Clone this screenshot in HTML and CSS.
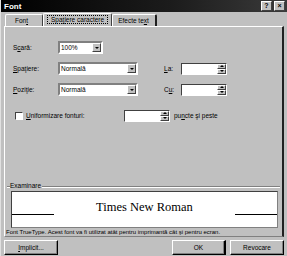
FILE: index.html
```html
<!DOCTYPE html>
<html lang="ro">
<head>
    <meta charset="UTF-8">
    <title>Font</title>
    <link rel="stylesheet" href="styles.css">
</head>
<body>
    <div class="window">
        <div class="titlebar">
            <span class="title">Font</span>
            <div class="title-buttons">
                <span class="tbtn">?</span>
                <span class="tbtn">&#215;</span>
            </div>
        </div>

        <div class="tabs">
            <div class="tab">Fon<u>t</u></div>
            <div class="tab active"><span class="focus">Spa<u>ţ</u>iere caractere</span></div>
            <div class="tab">Efecte te<u>x</u>t</div>
        </div>

        <div class="panel">
            <div class="row">
                <label class="lbl">S<u>c</u>ară:</label>
                <div class="select short"><span>100%</span><i class="drop"></i></div>
            </div>
            <div class="row">
                <label class="lbl"><u>S</u>paţiere:</label>
                <div class="select"><span>Normală</span><i class="drop"></i></div>
                <label class="lbl-small"><u>L</u>a:</label>
                <div class="spin"><span></span><i class="arrows"><b class="up"></b><b class="down"></b></i></div>
            </div>
            <div class="row">
                <label class="lbl"><u>P</u>oziţie:</label>
                <div class="select"><span>Normală</span><i class="drop"></i></div>
                <label class="lbl-small">C<u>u</u>:</label>
                <div class="spin"><span></span><i class="arrows"><b class="up"></b><b class="down"></b></i></div>
            </div>
            <div class="row kern">
                <span class="check"></span>
                <label class="lbl-kern"><u>U</u>niformizare fonturi:</label>
                <div class="spin"><span></span><i class="arrows"><b class="up"></b><b class="down"></b></i></div>
                <label class="after">pu<u>n</u>cte şi peste</label>
            </div>

            <div class="preview-group">
                <div class="group-title">Examinare</div>
                <div class="preview">
                    <span class="line"></span>
                    <span class="sample">Times New Roman</span>
                    <span class="line"></span>
                </div>
            </div>
            <p class="note">Font TrueType. Acest font va fi utilizat atât pentru imprimantă cât şi pentru ecran.</p>
        </div>

        <div class="buttons">
            <button class="btn"><u>I</u>mplicit...</button>
            <div class="right-buttons">
                <button class="btn default">OK</button>
                <button class="btn">Revocare</button>
            </div>
        </div>
    </div>
</body>
</html>
```

FILE: styles.css
```css
body {
    margin: 0;
    background: #c0c0c0;
    font-family: "Liberation Sans", Arial, sans-serif;
    font-size: 6.5px;
    color: #000;
}

.window {
    width: 287px;
    height: 256px;
    background: #c0c0c0;
    box-sizing: border-box;
    border-left: 1px solid #e0e0e0;
    overflow: hidden;
}

/* Bara de titlu */
.titlebar {
    height: 12px;
    display: flex;
    align-items: center;
    justify-content: space-between;
    padding: 0 2px 0 3px;
    background: linear-gradient(90deg, #000 0%, #1c1c1c 60%, #3a3a3a 100%);
}

.title {
    color: #fff;
    font-weight: bold;
    font-size: 8px;
}

.title-buttons {
    display: flex;
    gap: 2px;
}

.tbtn {
    width: 9px;
    height: 8px;
    background: #c0c0c0;
    border: 1px solid;
    border-color: #fff #404040 #404040 #fff;
    font-size: 7px;
    font-weight: bold;
    line-height: 8px;
    text-align: center;
}

/* Taburi */
.tabs {
    display: flex;
    align-items: flex-end;
    padding: 1px 0 0 4px;
    height: 13px;
}

.tab {
    height: 11px;
    line-height: 11px;
    padding: 0 8px;
    border: 1px solid;
    border-color: #fff #404040 transparent #fff;
    border-bottom: none;
    border-radius: 2px 2px 0 0;
}

.tab:first-child {
    width: 20px;
    padding: 0 7px 0 9px;
}

.tab.active {
    height: 12px;
    padding: 0 4px;
    line-height: 12px;
}

.focus {
    outline: 1px dotted #000;
    padding: 0 3px;
}

.tab:last-child {
    padding: 0 6px 0 5px;
    border-right: 2px solid #202020;
}

/* Panou */
.panel {
    margin: 0 3px 0 3px;
    height: 211px;
    box-sizing: border-box;
    border: 1px solid;
    border-color: #fff #202020 #808080 #fff;
    border-right-width: 2px;
    padding: 14px 6px 0 8px;
    display: flex;
    flex-direction: column;
}

.row {
    display: flex;
    align-items: center;
    height: 13px;
    margin-bottom: 8px;
}

.lbl {
    width: 45px;
}

.lbl-small {
    width: 17px;
    margin-left: 26px;
}

.select {
    width: 80px;
    height: 13px;
    box-sizing: border-box;
    background: #fff;
    border: 2px solid;
    border-color: #808080 #fff #fff #808080;
    display: flex;
    align-items: center;
    justify-content: space-between;
    padding-left: 1px;
}

.select.short {
    width: 45px;
}

.drop {
    width: 9px;
    height: 9px;
    box-sizing: border-box;
    background: #c0c0c0;
    border: 1px solid;
    border-color: #fff #404040 #404040 #fff;
    display: flex;
    align-items: center;
    justify-content: center;
}

.drop::after {
    content: "";
    border-left: 2px solid transparent;
    border-right: 2px solid transparent;
    border-top: 2px solid #000;
}

.spin {
    width: 46px;
    height: 12px;
    box-sizing: border-box;
    background: #fff;
    border: 1px solid;
    border-color: #404040 #fff #fff #404040;
    display: flex;
    justify-content: flex-end;
}

.arrows {
    width: 9px;
    display: flex;
    flex-direction: column;
}

.arrows b {
    flex: 1;
    background: #c0c0c0;
    border: 1px solid;
    border-color: #fff #404040 #404040 #fff;
    display: flex;
    align-items: center;
    justify-content: center;
}

.up::after {
    content: "";
    border-left: 2px solid transparent;
    border-right: 2px solid transparent;
    border-bottom: 2px solid #000;
}

.down::after {
    content: "";
    border-left: 2px solid transparent;
    border-right: 2px solid transparent;
    border-top: 2px solid #000;
}

.kern {
    margin-top: 5px;
}

.check {
    width: 6px;
    height: 6px;
    background: #fff;
    border: 1px solid;
    border-color: #404040 #fff #fff #404040;
    margin: 0 3px 0 2px;
}

.lbl-kern {
    width: 98px;
}

.after {
    margin-left: 4px;
}

/* Examinare */
.preview-group {
    margin-top: 56px;
    margin-left: -6px;
    margin-right: -4px;
    border-top: 1px solid #808080;
    box-shadow: 0 1px 0 #fff inset;
    position: relative;
}

.group-title {
    position: absolute;
    top: -5px;
    left: 3px;
    background: #c0c0c0;
    padding-right: 1px;
}

.preview {
    margin: 4px 2px 0 4px;
    height: 37px;
    background: #fff;
    border: 1px solid;
    border-color: #404040 #808080 #808080 #404040;
    display: flex;
    align-items: center;
    justify-content: space-between;
    padding-top: 2px;
    box-sizing: border-box;
}

.line {
    width: 42px;
    border-top: 1px solid #000;
    margin-top: 8px;
}

.sample {
    font-family: "Liberation Serif", "Times New Roman", serif;
    font-size: 12.5px;
    margin-bottom: 6px;
}

.note {
    margin: 1px 0 0 -7px;
    font-size: 6px;
    white-space: nowrap;
}

/* Butoane */
.buttons {
    display: flex;
    justify-content: space-between;
    padding: 3px 3px 0 3px;
}

.right-buttons {
    display: flex;
    gap: 4px;
}

.btn {
    width: 54px;
    height: 15px;
    font-family: inherit;
    font-size: 6.5px;
    color: #000;
    background: #c0c0c0;
    border: 1px solid;
    border-color: #fff #000 #000 #fff;
    box-shadow: inset -1px -1px 0 #808080;
    padding: 0;
}

.btn.default {
    border-right-width: 2px;
}
```
